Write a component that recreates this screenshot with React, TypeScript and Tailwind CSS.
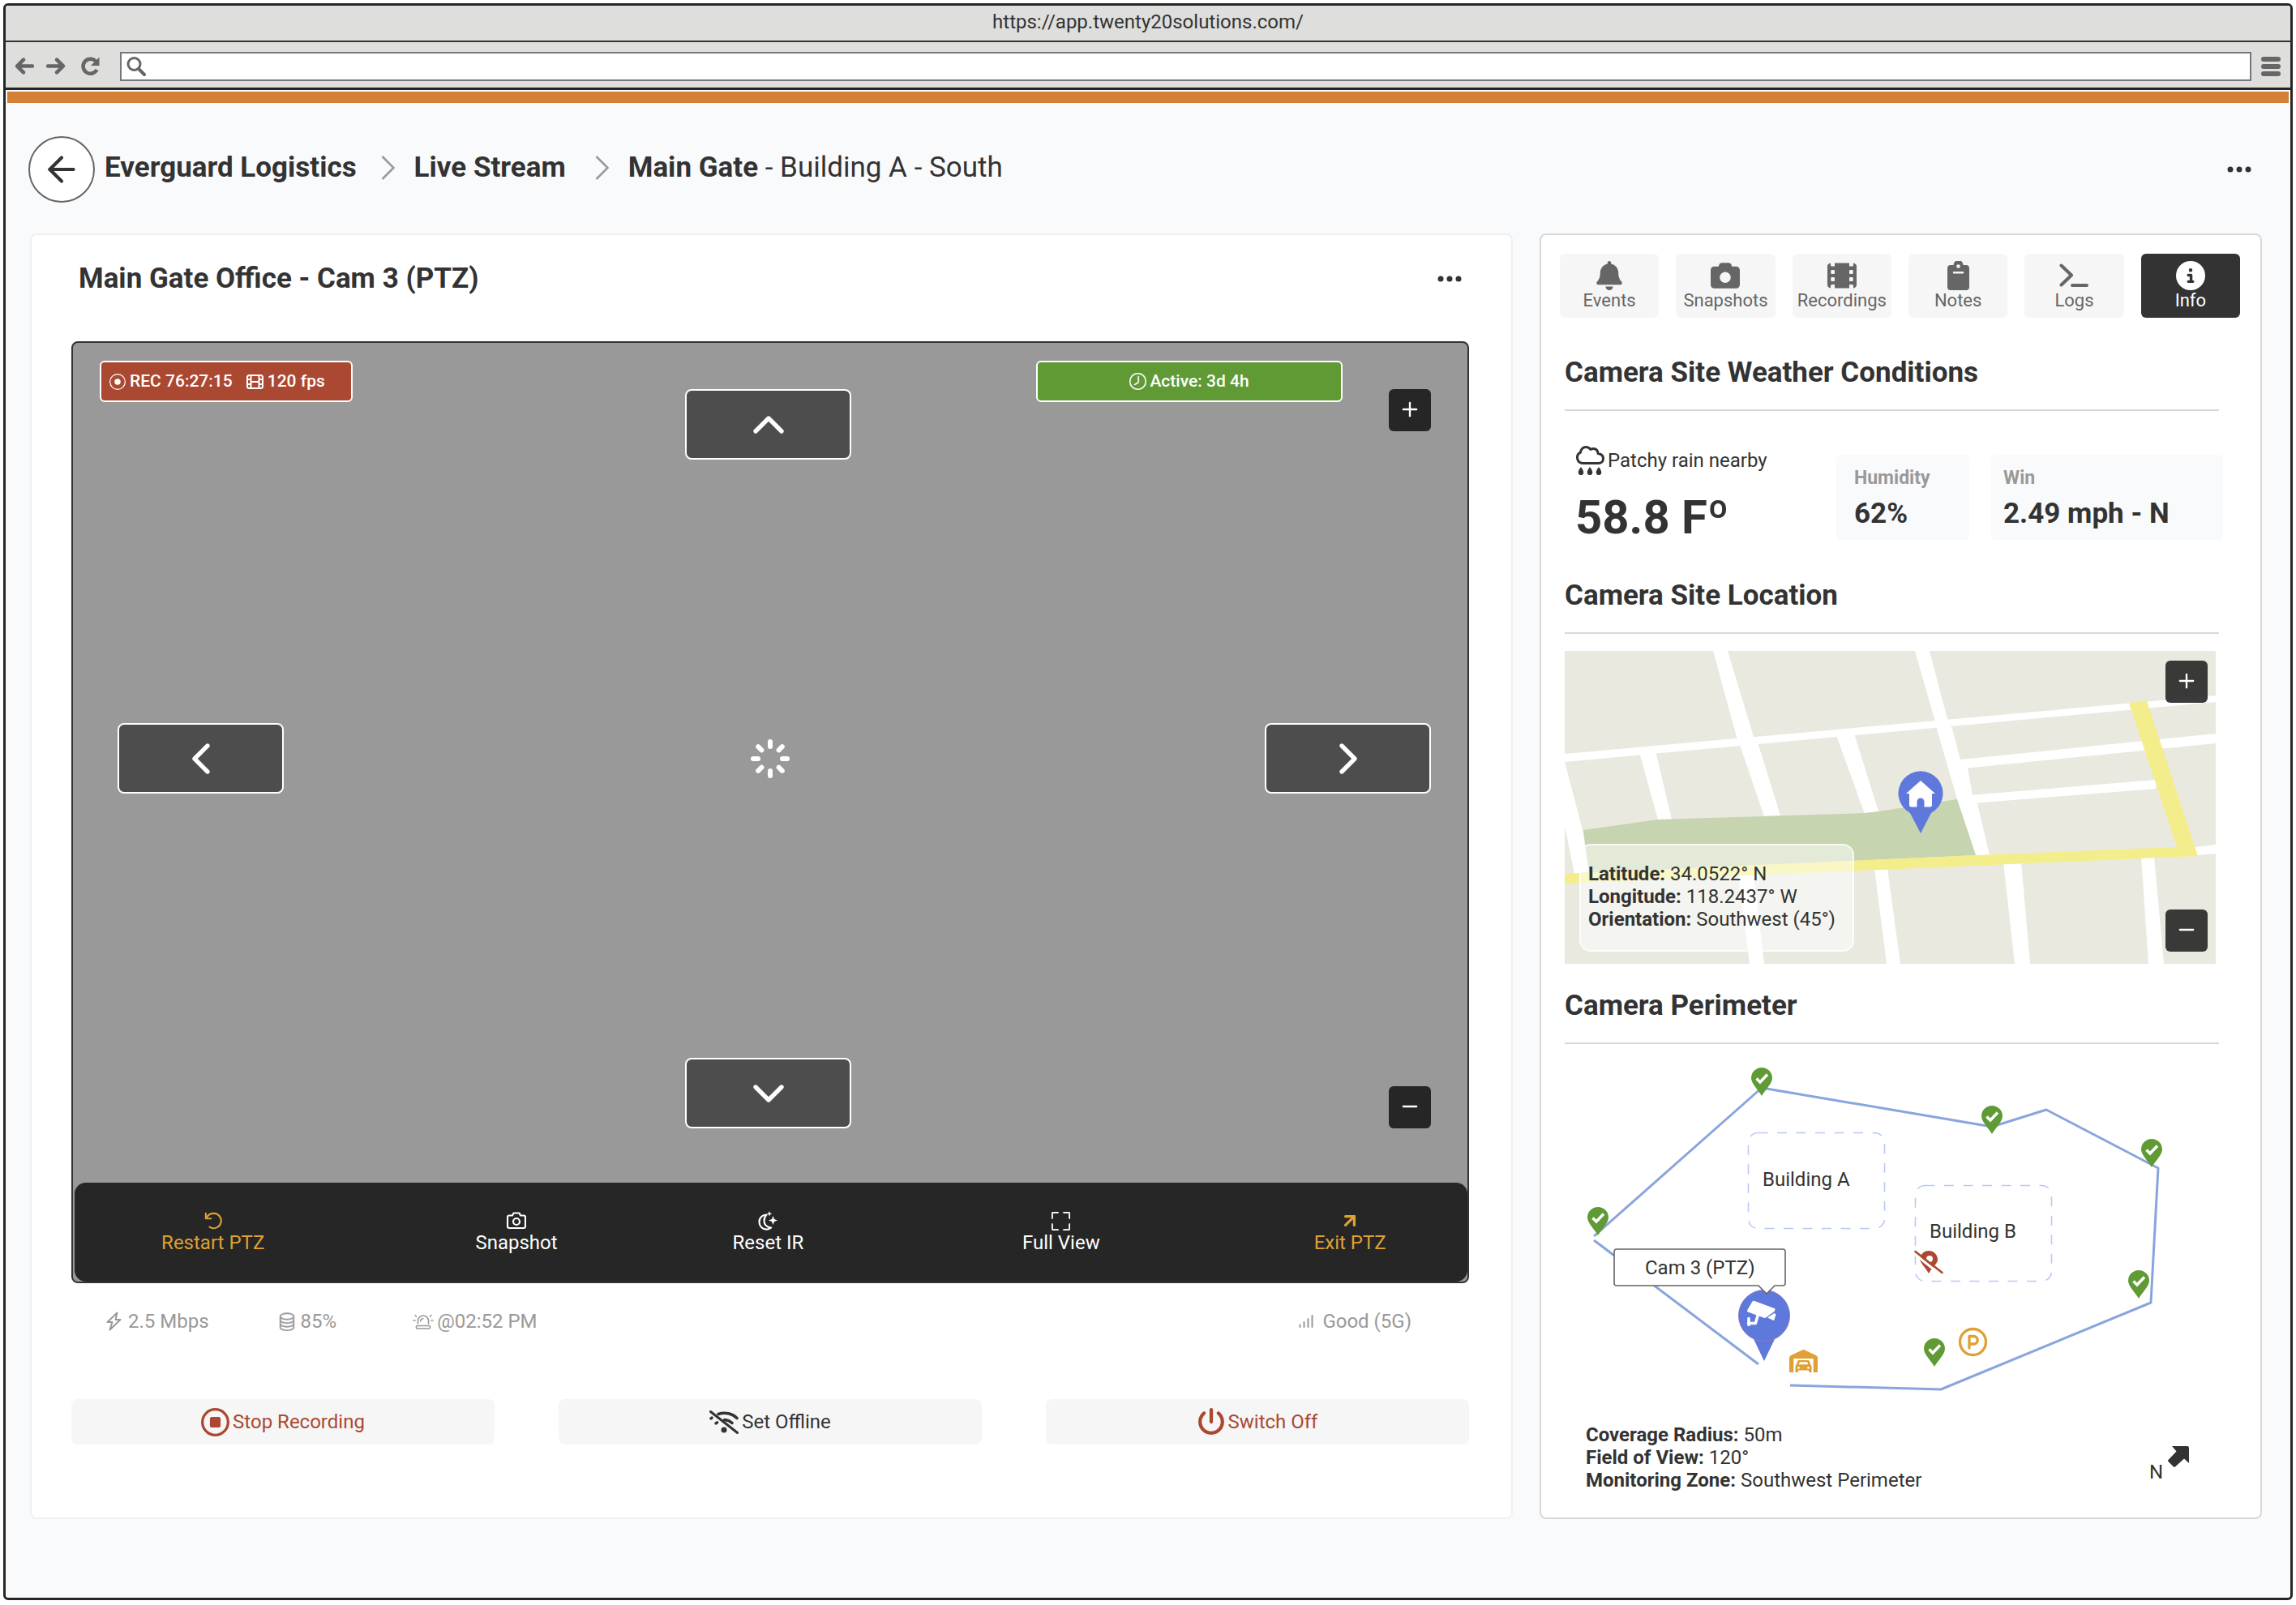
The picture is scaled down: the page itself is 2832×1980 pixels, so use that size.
import { ReactNode, SVGProps, useState } from 'react';
import { ArrowLeft, ArrowUpRight, ChevronDown, ChevronLeft, ChevronRight, ChevronUp, Minus, Plus } from 'lucide-react';
import { BsClock, BsDatabase, BsFullscreen, BsRecordCircle } from 'react-icons/bs';
import { FaArrowLeft, FaArrowRight, FaBell, FaCamera, FaCircleInfo, FaPowerOff, FaRegCircleStop } from 'react-icons/fa6';

type IconProps = SVGProps<SVGSVGElement>;

/* ---------- Icons ---------- */

const ReloadIcon = (p: IconProps) => (
  <svg viewBox="0 0 24 24" fill="none" {...p}>
    <path d="M19 5.5A9 9 0 1 0 20.5 16" stroke="currentColor" strokeWidth="4.5" />
    <path d="M23.500 0.500v10.500h-10.500z" fill="currentColor" />
  </svg>
);

const SearchIcon = (p: IconProps) => (
  <svg viewBox="0 0 24 24" fill="none" stroke="currentColor" {...p}>
    <circle cx="9.500" cy="9" r="7.500" strokeWidth="3" />
    <path d="M15 15l7 7" strokeWidth="4" strokeLinecap="round" />
  </svg>
);

const MenuIcon = (p: IconProps) => (
  <svg viewBox="0 0 24 24" fill="currentColor" {...p}>
    <rect y="0" width="24" height="6" rx="3" />
    <rect y="9" width="24" height="6" rx="3" />
    <rect y="18" width="24" height="6" rx="3" />
  </svg>
);

const FilmIcon = (p: IconProps) => (
  <svg viewBox="0 0 36 32" fill="currentColor" {...p}>
    <path
      fillRule="evenodd"
      d="M4 .5V3a1.500 1.500 0 0 0 1.500 1.500H9V.5h18v4h3.500A1.500 1.500 0 0 0 32 3V.5c2.500.5 4 2 4 4v23c0 2-1.500 3.500-4 4V28.500A1.500 1.500 0 0 0 30.500 27H27v4.500H9V27H5.500A1.500 1.500 0 0 0 4 28.500v3c-2.500-.5-4-2-4-4v-23C0 2.500 1.500 1 4 .5zM5.500 9A1.200 1.200 0 0 0 4.300 10.200v2.600A1.200 1.200 0 0 0 5.500 14h2.300A1.200 1.200 0 0 0 9 12.800v-2.600A1.200 1.200 0 0 0 7.800 9zM5.500 18a1.200 1.200 0 0 0-1.200 1.200v2.600A1.200 1.200 0 0 0 5.500 23h2.300A1.200 1.200 0 0 0 9 21.800v-2.600A1.200 1.200 0 0 0 7.800 18zM28.200 9A1.200 1.200 0 0 0 27 10.200v2.600a1.200 1.200 0 0 0 1.200 1.200h2.300a1.200 1.200 0 0 0 1.200-1.200v-2.600A1.200 1.200 0 0 0 30.500 9zM28.200 18a1.200 1.200 0 0 0-1.200 1.200v2.600a1.200 1.200 0 0 0 1.200 1.200h2.300a1.200 1.200 0 0 0 1.200-1.200v-2.600a1.200 1.200 0 0 0-1.200-1.200z"
    />
  </svg>
);

const FilmOutlineIcon = (p: IconProps) => (
  <svg viewBox="0 0 21 18" fill="none" stroke="currentColor" strokeWidth="2" {...p}>
    <rect x="1" y="1" width="19" height="16" rx="2.500" />
    <path d="M5.500 1v16M15.500 1v16M5.500 9h10M1 6h4.500M1 12h4.500M15.500 6H20M15.500 12H20" />
  </svg>
);

const ClipboardIcon = (p: IconProps) => (
  <svg viewBox="0 0 27 36" fill="currentColor" {...p}>
    <path
      fillRule="evenodd"
      d="M7.500 5a6 6 0 0 1 12 0H23a4 4 0 0 1 4 4v23a4 4 0 0 1-4 4H4a4 4 0 0 1-4-4V9a4 4 0 0 1 4-4zM13.500 4.200a2.300 2.300 0 1 0 0 4.600 2.300 2.300 0 0 0 0-4.600zM8 13a1.200 1.200 0 0 0 0 2.500h11a1.200 1.200 0 0 0 0-2.500z"
    />
  </svg>
);

const TerminalIcon = (p: IconProps) => (
  <svg viewBox="0 0 36 30" fill="none" stroke="currentColor" strokeWidth="4" strokeLinecap="round" strokeLinejoin="round" {...p}>
    <path d="M2.500 2.500l12.500 12-12.500 12M16 27h18" />
  </svg>
);

const RestartIcon = (p: IconProps) => (
  <svg viewBox="0 0 24 24" fill="none" stroke="currentColor" strokeWidth="2.300" strokeLinecap="round" strokeLinejoin="round" {...p}>
    <path d="M2 2v7h7M2.500 8.500C5 4 8.500 2 12.500 2a10 10 0 1 1-5.500 18.300" />
  </svg>
);

const CameraOutlineIcon = (p: IconProps) => (
  <svg viewBox="0 0 24 22" fill="none" stroke="currentColor" strokeWidth="2.200" strokeLinejoin="round" {...p}>
    <path d="M3 4.500h4l1.500-3h7l1.500 3h4a2 2 0 0 1 2 2V18a2 2 0 0 1-2 2H3a2 2 0 0 1-2-2V6.500a2 2 0 0 1 2-2z" />
    <circle cx="12" cy="12" r="4" />
  </svg>
);

const NightIcon = (p: IconProps) => (
  <svg viewBox="0 0 24 24" fill="none" stroke="currentColor" {...p}>
    <path d="M10.500 4.500C5.500 4.500 1.500 8.300 1.500 13.500s4 9.200 9 9.200c2.300 0 4.300-.9 5.700-2.200C10.500 20 7.500 16.500 7.500 12c0-3 1-5.500 3-7.500z" strokeWidth="2.200" strokeLinejoin="round" />
    <path
      stroke="none"
      fill="currentColor"
      d="M18.500 6l1.500 4 4 1.500-4 1.500-1.500 4-1.500-4-4-1.500 4-1.500zM14 0l.9 2.400 2.400.9-2.400.9-.9 2.400-.9-2.400-2.400-.9 2.400-.9z"
    />
  </svg>
);

const BoltIcon = (p: IconProps) => (
  <svg viewBox="0 0 19 24" fill="none" stroke="currentColor" strokeWidth="2" strokeLinejoin="round" {...p}>
    <path d="M13.500 1.500L1.500 13h6l-3 9.500L17.500 10h-6z" />
  </svg>
);

const SirenIcon = (p: IconProps) => (
  <svg viewBox="0 0 26 19" fill="none" stroke="currentColor" strokeWidth="1.600" strokeLinecap="round" {...p}>
    <rect x="4.500" y="14.500" width="17" height="3.500" rx="1" />
    <path d="M6.500 12V8.500a6.500 6.500 0 0 1 13 0V12M9.800 9a3.200 3.200 0 0 1 3-3.200M1 8h2M23 8h2M3 1.500l1.500 1.500M23 1.500L21.500 3" />
  </svg>
);

const SignalIcon = (p: IconProps) => (
  <svg viewBox="0 0 18 16" stroke="currentColor" strokeWidth="2" strokeLinecap="round" {...p}>
    <path d="M1.500 12.500V15M6.500 9v6M11.500 5v10M16.500 1v14" />
  </svg>
);

const WifiOffIcon = (p: IconProps) => (
  <svg viewBox="0 0 36 29" fill="none" stroke="currentColor" strokeWidth="3.500" strokeLinecap="round" {...p}>
    <path d="M11 4.500C19.500 1.500 28.500 4 34 9.500M2 9.800l1-.8M18.500 11.500c4 .3 7 1.700 9.500 4M8 16l1.500-1.200" />
    <circle cx="18" cy="24" r="3.500" fill="currentColor" stroke="none" />
    <path d="M1.500 1.500l33 26" strokeWidth="3" />
  </svg>
);

const RainIcon = (p: IconProps) => (
  <svg viewBox="0 0 36 36" fill="none" stroke="currentColor" strokeWidth="3" strokeLinejoin="round" {...p}>
    <path d="M9 21.500A7 7 0 0 1 6.500 8.200C6.500 4.500 9.500 1.500 13 1.500c2.500 0 4.500 1 5.800 2.900C23.500 2 28 4.500 28 9.500c4 .5 6.500 3 6.500 6.200 0 3.300-2.500 5.800-6 5.800z" />
    <path
      stroke="none"
      fill="currentColor"
      d="M7 26c2 3 3.300 5 3.300 6.800a3.300 3.300 0 0 1-6.600 0C3.700 31 5 29 7 26zM18 26c2 3 3.300 5 3.300 6.800a3.300 3.300 0 0 1-6.600 0C14.700 31 16 29 18 26zM29 26c2 3 3.300 5 3.300 6.800a3.300 3.300 0 0 1-6.600 0C25.700 31 27 29 29 26z"
    />
  </svg>
);

const DotsIcon = (p: IconProps) => (
  <svg viewBox="0 0 30 8" fill="currentColor" {...p}>
    <circle cx="4" cy="4" r="3.500" />
    <circle cx="15" cy="4" r="3.500" />
    <circle cx="26" cy="4" r="3.500" />
  </svg>
);

const SpinnerIcon = (p: IconProps) => (
  <svg viewBox="0 0 48 48" stroke="currentColor" strokeWidth="6" strokeLinecap="round" {...p}>
    <path d="M24 3v6M24 39v6M3 24h6M39 24h6M9.200 9.200l4.200 4.200M34.600 34.600l4.200 4.200M9.200 38.800l4.200-4.200M34.600 13.400l4.200-4.200" />
  </svg>
);

/* ---------- Shared pieces ---------- */

const Crumb = () => (
  <svg viewBox="0 0 18 30" fill="none" stroke="#999" strokeWidth="2.500" className="h-[30px] w-[18px]">
    <path d="M1.500 1l14 14-14 14" />
  </svg>
);

const SectionTitle = ({ children }: { children: ReactNode }) => (
  <h2 className="border-b-2 border-[#d8d8d8] pb-[23px] text-[35px] leading-[44px] font-bold">{children}</h2>
);

const PanButton = ({ label, className, children }: { label: string; className: string; children: ReactNode }) => (
  <button
    aria-label={label}
    className={`absolute flex h-[87px] w-[205px] items-center justify-center rounded-lg border-2 border-white bg-[#4d4d4d] text-white ${className}`}
  >
    {children}
  </button>
);

const ZoomButton = ({ label, className, children }: { label: string; className: string; children: ReactNode }) => (
  <button aria-label={label} className={`absolute flex size-[52px] items-center justify-center rounded-md pb-[3px] text-white ${className}`}>
    {children}
  </button>
);

/* ---------- Browser chrome ---------- */

function BrowserBar() {
  return (
    <div className="bg-[#dededc]">
      <div className="flex h-[45px] items-center justify-center border-b-2 border-[#333] pb-1 text-[24px] leading-[28px]">
        https://app.twenty20solutions.com/
      </div>
      <div className="flex h-[59px] items-center border-b-[3px] border-[#262626] pt-[3px] pr-[12px] pl-[11px] text-[#666]">
        <button aria-label="Back"><FaArrowLeft className="size-[25px] stroke-current stroke-[30]" /></button>
        <button aria-label="Forward" className="ml-[13px]"><FaArrowRight className="size-[25px] stroke-current stroke-[30]" /></button>
        <button aria-label="Reload" className="ml-[18px]"><ReloadIcon className="size-[24px]" /></button>
        <div className="ml-[25px] flex h-[36px] grow items-center border-2 border-[#777] bg-white pl-[6px]">
          <SearchIcon className="size-[24px]" />
          <input aria-label="Address" className="h-full grow px-2 text-[22px] outline-none" />
        </div>
        <button aria-label="Menu" className="ml-[12px]"><MenuIcon className="size-[24px]" /></button>
      </div>
    </div>
  );
}

/* ---------- Live stream ---------- */

const actions = [
  { label: 'Restart PTZ', icon: <RestartIcon className="size-[22px]" />, color: 'text-[#dfa035]' },
  { label: 'Snapshot', icon: <CameraOutlineIcon className="h-[22px] w-[24px]" />, color: 'text-white' },
  { label: 'Reset IR', icon: <NightIcon className="size-[24px]" />, color: 'text-white' },
  { label: 'Full View', icon: <BsFullscreen className="size-[23px] stroke-current stroke-[0.5]" />, color: 'text-white' },
  { label: 'Exit PTZ', icon: <ArrowUpRight className="size-[26px]" strokeWidth={3} />, color: 'text-[#dfa035]' },
];

function VideoPlayer() {
  return (
    <div className="relative mt-[55px] flex h-[1162px] flex-col justify-end overflow-hidden rounded-lg border-2 border-[#333] bg-[#999] pl-[2px]">
      <div className="absolute top-[22px] left-[33px] flex h-[51px] w-[312px] items-center rounded-md border-2 border-white bg-[#ab4831] px-[10px] text-[21px] font-medium text-white">
        <BsRecordCircle className="size-[20px]" />
        <span className="ml-[5px]">REC 76:27:15</span>
        <FilmOutlineIcon className="ml-[17px] h-[18px] w-[21px]" />
        <span className="ml-[5px]">120 fps</span>
      </div>
      <div className="absolute top-[22px] right-[154px] flex h-[51px] w-[378px] items-center justify-center gap-[4px] rounded-md border-2 border-white bg-[#5f9a35] text-[21px] font-medium text-white">
        <BsClock className="size-[21px] -scale-x-100 stroke-current stroke-[0.3]" />
        Active: 3d 4h
      </div>

      <PanButton label="Tilt up" className="top-[57px] right-[5px] left-0 mx-auto">
        <ChevronUp className="size-[64px]" strokeWidth={2} />
      </PanButton>
      <PanButton label="Tilt down" className="right-[5px] bottom-[189px] left-0 mx-auto">
        <ChevronDown className="size-[64px]" strokeWidth={2} />
      </PanButton>
      <PanButton label="Pan left" className="bottom-[602px] left-[55px]">
        <ChevronLeft className="size-[64px]" strokeWidth={2} />
      </PanButton>
      <PanButton label="Pan right" className="right-[45px] bottom-[602px]">
        <ChevronRight className="size-[64px]" strokeWidth={2} />
      </PanButton>
      <SpinnerIcon className="absolute inset-x-0 bottom-[621px] mx-auto size-[48px] text-white" />
      <ZoomButton label="Zoom in" className="top-[57px] right-[45px] bg-[#262626]"><Plus className="size-[28px]" /></ZoomButton>
      <ZoomButton label="Zoom out" className="right-[45px] bottom-[189px] bg-[#262626]"><Minus className="size-[28px]" /></ZoomButton>

      <div className="grid h-[122px] grid-cols-[342fr_408fr_214fr_510fr_204fr] rounded-[14px] bg-[#262626] pr-[43px]">
        {actions.map((a) => (
          <button key={a.label} className={`flex flex-col items-center justify-center text-[24px] leading-[28px] ${a.color}`}>
            <span className="flex h-[26px] items-center">{a.icon}</span>
            {a.label}
          </button>
        ))}
      </div>
    </div>
  );
}

function StreamCard() {
  const buttonClass = 'flex h-[56px] items-center justify-center gap-[4px] rounded-lg bg-[#f6f6f6]';
  return (
    <section className="rounded-lg border-2 border-[#f0f0f0] bg-white pt-[32px] pr-[52px] pl-[49px]">
      <div className="flex items-center justify-between px-[9px]">
        <h1 className="text-[35px] leading-[44px] font-bold">Main Gate Office - Cam 3 (PTZ)</h1>
        <button aria-label="Camera options"><DotsIcon className="h-[8px] w-[30px]" /></button>
      </div>

      <VideoPlayer />

      <div className="mt-[33px] flex items-center pr-[71px] pl-[43px] text-[24px] leading-[28px] text-[#999]">
        <BoltIcon className="h-[24px] w-[19px]" />
        <span className="ml-[8px]">2.5 Mbps</span>
        <BsDatabase className="ml-[84px] size-[24px] stroke-current stroke-[0.3]" />
        <span className="ml-[5px]">85%</span>
        <SirenIcon className="ml-[94px] h-[19px] w-[26px]" />
        <span className="ml-[4px] grow">@02:52 PM</span>
        <SignalIcon className="h-[16px] w-[18px]" />
        <span className="ml-[11px]">Good (5G)</span>
      </div>

      <div className="mt-[82px] grid grid-cols-3 gap-[79px] text-[24px]">
        <button className={`${buttonClass} text-[#ab4831]`}>
          <FaRegCircleStop className="size-[35px]" />
          Stop Recording
        </button>
        <button className={buttonClass}>
          <WifiOffIcon className="h-[29px] w-[36px]" />
          Set Offline
        </button>
        <button className={`${buttonClass} text-[#ab4831]`}>
          <FaPowerOff className="size-[34px]" />
          Switch Off
        </button>
      </div>
    </section>
  );
}

/* ---------- Info panel ---------- */

const tabs = [
  { label: 'Events', icon: <FaBell className="size-[36px]" /> },
  { label: 'Snapshots', icon: <FaCamera className="size-[36px]" /> },
  { label: 'Recordings', icon: <FilmIcon className="h-[32px] w-[36px]" /> },
  { label: 'Notes', icon: <ClipboardIcon className="h-[36px] w-[27px]" /> },
  { label: 'Logs', icon: <TerminalIcon className="h-[30px] w-[36px]" /> },
  { label: 'Info', icon: <FaCircleInfo className="size-[36px]" /> },
];

function Weather() {
  return (
    <div className="-mr-[5px] flex items-start">
      <div className="mt-[47px] ml-[13px] grow">
        <p className="flex items-center gap-[4px] text-[24px] leading-[28px]">
          <RainIcon className="-my-1 size-[36px]" />
          Patchy rain nearby
        </p>
        <p className="mt-[22px] text-[58px] leading-[68px] font-bold">58.8 Fº</p>
      </div>
      <dl className="mt-[54px] h-[105px] w-[164px] rounded-md bg-[#f9fafc] px-[22px] pt-[15px]">
        <dt className="text-[23px] leading-[28px] font-bold text-[#999]">Humidity</dt>
        <dd className="mt-[8px] text-[35px] leading-[44px] font-bold">62%</dd>
      </dl>
      <dl className="mt-[54px] ml-[27px] h-[105px] w-[286px] rounded-md bg-[#f9fafc] px-[15px] pt-[15px]">
        <dt className="text-[23px] leading-[28px] font-bold text-[#999]">Win</dt>
        <dd className="mt-[8px] text-[35px] leading-[44px] font-bold">2.49 mph - N</dd>
      </dl>
    </div>
  );
}

function SiteMap() {
  return (
    <div className="relative mt-[21px] mr-[4px] h-[386px]">
      <svg viewBox="0 0 803 386" preserveAspectRatio="xMidYMid slice" className="size-full">
        <rect width="803" height="386" fill="#e9e9e0" />
        <g fill="#fff">
          <path d="M183 0h18l32 106 6 10 27 87-20 1-30-88-4-10z" />
          <path d="M432 0h18l22 84 6 12 10 38 9 10 6 34 6 10 15 64h-17l-23-69-25-87-3-12z" />
          <path d="M0 127L803 55v8L0 137z" />
          <path d="M92 125l20-2 20 85h-17zM335 104l22-2 30 96-17 3z" />
          <path d="M488 134l315-32v12L492 145zM500 178l229-19v11l-226 18z" />
          <path d="M0 137l22 84 8 51-18 3-12-59zM770 243l33-4v11l-33 3z" />
          <path d="M214 276h19l13 110h-18zM382 268h16l16 118h-17zM541 260h22l11 126h-19zM711 254h16l12 132h-19z" />
        </g>
        <path d="M23 221l92-13 255-8 17-2 97-15 23 69-477 22z" fill="#c6d4b0" />
        <path d="M0 275l507-23 248-10L696 64l22-2 63 191L0 287z" fill="#f3ee8b" />
        {/* home pin */}
        <path d="M439 225l-13-25a27.500 27.500 0 1 1 26 0z" fill="#5f78dc" />
        <path d="M439 160l18 16h-4v14a2.500 2.500 0 0 1-2.500 2.500h-7V186a4.500 4.500 0 0 0-9 0v6.500h-7A2.500 2.500 0 0 1 425 190v-14h-4z" fill="#fff" />
      </svg>
      <p className="absolute top-[238px] left-[18px] h-[133px] w-[339px] rounded-[14px] border-2 border-white/70 bg-white/50 px-[9px] pt-[21px] text-[24px] leading-[28px]">
        <b>Latitude:</b> 34.0522° N<br />
        <b>Longitude:</b> 118.2437° W<br />
        <b>Orientation:</b> Southwest (45°)
      </p>
      <ZoomButton label="Map zoom in" className="top-[12px] right-[10px] bg-[#262626]/90"><Plus className="size-[28px]" /></ZoomButton>
      <ZoomButton label="Map zoom out" className="right-[10px] bottom-[15px] bg-[#262626]/90"><Minus className="size-[28px]" /></ZoomButton>
    </div>
  );
}

const sensors = [
  [243, 29],
  [527, 76],
  [724, 117],
  [41, 201],
  [708, 279],
  [456, 363],
];

function PerimeterMap() {
  return (
    <svg viewBox="0 0 807 450" className="w-full text-[24px]" fill="none">
      <path d="M36 237L243 54l284 48 67-21 138 72-9 166-259 107-186-5M36 242l203 153" stroke="#88a5dd" strokeWidth="3" strokeLinejoin="round" />

      <g stroke="#b9c9f2" strokeWidth="1.600" strokeDasharray="12 11.500">
        <rect x="226.500" y="109.500" width="168" height="118" rx="12" />
        <rect x="432.500" y="174.500" width="168" height="118" rx="12" />
      </g>
      <text x="244" y="175" fill="#333">Building A</text>
      <text x="450" y="239" fill="#333">Building B</text>

      {sensors.map(([x, y]) => (
        <g key={x} transform={`translate(${x - 13} ${y})`}>
          <path d="M13 35C9 28 0 19.500 0 13a13 13 0 0 1 26 0c0 6.500-9 15-13 22z" fill="#5f9a35" />
          <path d="M6.500 13.500l4.500 4.500 9-9.500" stroke="#fff" strokeWidth="3.500" />
        </g>
      ))}

      {/* offline sensor */}
      <g>
        <path
          fillRule="evenodd"
          d="M449 283c-3-6-11-14-11-17a11 11 0 1 1 22 0c0 5-8 11-11 17zM450 261a4 4 0 1 0 0 8 4 4 0 0 0 0-8z"
          fill="#ab4831"
        />
        <path d="M431 258.500l33 26.500" stroke="#fff" strokeWidth="3" />
        <path d="M432.500 256l33 26" stroke="#ab4831" strokeWidth="2.600" strokeLinecap="round" />
      </g>

      {/* camera pin */}
      <path d="M246 391l-13-27h26z" fill="#5f78dc" />
      <circle cx="246" cy="335" r="31.500" fill="#5f78dc" stroke="#8579bd" />
      <g fill="#fff">
        <path d="M233.500 316.800l25 9.200a1.500 1.500 0 0 1 .6 2.500l-.6 1.500-10.500 7.500a2.500 2.500 0 0 1-2.300.3l-19.800-7.300a1.500 1.500 0 0 1-.8-2l6.200-10.700a1.800 1.800 0 0 1 2.200-1z" />
        <path d="M250 337.500l8.500-5.500 1.500.8a1.500 1.500 0 0 1 .3 1.500l-1.800 5.700a1.200 1.200 0 0 1-1.500.8z" />
        <path d="M238 335.500l-2.700 9h-8.800M227 338.500v8" fill="none" stroke="#fff" strokeWidth="3.600" strokeLinecap="round" strokeLinejoin="round" />
      </g>

      <path
        d="M64 253h205a3 3 0 0 1 3 3v39a3 3 0 0 1-3 3h-10l-10 10-10-10H64a3 3 0 0 1-3-3v-39a3 3 0 0 1 3-3z"
        fill="#fff"
        stroke="#666"
        strokeWidth="1.600"
      />
      <text x="99" y="284" fill="#333">Cam 3 (PTZ)</text>

      {/* garage */}
      <g fill="#dfa035">
        <path d="M277 405v-18a3.500 3.500 0 0 1 2-3l14.500-6.700a3 3 0 0 1 2 0l14.500 6.700a3.500 3.500 0 0 1 2 3v18h-5.300v-17h-24.400v17z" />
        <path
          fillRule="evenodd"
          d="M289 390h11a2 2 0 0 1 1.800 1.300l1.500 4.200c.8.5 1.200 1.300 1.200 2.500v6a1 1 0 0 1-1 1h-1.500a1 1 0 0 1-1-1v-1.500h-13v1.500a1 1 0 0 1-1 1h-1.500a1 1 0 0 1-1-1v-6c0-1.200.4-2 1.200-2.500l1.500-4.200A2 2 0 0 1 289 390zM289.800 392.300l-1 3h11.400l-1-3zM288.500 398a1.400 1.400 0 1 0 0 2.800 1.400 1.400 0 0 0 0-2.800zM300.500 398a1.400 1.400 0 1 0 0 2.800 1.400 1.400 0 0 0 0-2.800z"
        />
      </g>

      {/* parking */}
      <g stroke="#dfa035" strokeWidth="3.300">
        <circle cx="503.500" cy="367.500" r="16" />
        <path d="M499 375v-14.500h5.500a4.500 4.500 0 0 1 0 9.500H499" strokeLinecap="round" strokeLinejoin="round" />
      </g>
    </svg>
  );
}

function InfoPanel() {
  const [active, setActive] = useState('Info');

  return (
    <aside className="rounded-lg border-2 border-[#d8d8d8] bg-white pt-[23px] pr-[25px] pb-[32px] pl-[23px]">
      <nav className="grid grid-cols-6 gap-[21px]">
        {tabs.map((tab) => (
          <button
            key={tab.label}
            onClick={() => setActive(tab.label)}
            className={`flex h-[79px] flex-col items-center rounded-md pt-[9px] text-[22px] leading-[26px] ${
              active === tab.label ? 'bg-[#333] text-white' : 'bg-[#f6f6f6] text-[#666]'
            }`}
          >
            <span className="flex h-[36px] items-center">{tab.icon}</span>
            {tab.label}
          </button>
        ))}
      </nav>

      <div className="mt-[46px] pr-[26px] pl-[6px]">
        <SectionTitle>Camera Site Weather Conditions</SectionTitle>
        <Weather />
        <div className="mt-[41px]">
          <SectionTitle>Camera Site Location</SectionTitle>
        </div>
        <SiteMap />
        <div className="mt-[30px]">
          <SectionTitle>Camera Perimeter</SectionTitle>
        </div>
        <PerimeterMap />

        <div className="mt-[18px] flex items-start justify-between pr-[37px] pl-[26px] text-[24px] leading-[28px]">
          <p>
            <b>Coverage Radius:</b> 50m<br />
            <b>Field of View:</b> 120°<br />
            <b>Monitoring Zone:</b> Southwest Perimeter
          </p>
          <p className="flex items-center pt-[12px]">
            <span className="pt-[38px] leading-[20px]">N</span>
            <svg viewBox="0 0 26 26" fill="currentColor" className="ml-[6px] size-[26px]">
              <path d="M5 0h19a2 2 0 0 1 2 2v19l-6-5.500L9 25.500a1.500 1.500 0 0 1-2 0L.5 19a1.500 1.500 0 0 1 0-2L10.500 6.500z" />
            </svg>
          </p>
        </div>
      </div>
    </aside>
  );
}

export default function App() {
  return (
    <div className="flex min-h-screen bg-white px-1 pt-1 pb-[6px] font-[Roboto,sans-serif] text-[#333]">
      <div className="flex grow flex-col overflow-hidden rounded-md border-[3px] border-[#262626] bg-[#f9fafc]">
        <BrowserBar />
        <div className="mx-[2px] mt-[2px] h-[14px] bg-[#d48137]" />

        <main className="grow pt-[41px] pr-[35px] pl-[30px]">
          <header className="flex items-center justify-between pr-[13px]">
            <div className="-ml-[2px] flex items-center">
              <button aria-label="Go back" className="flex size-[82px] items-center justify-center rounded-full border-2 border-[#666] bg-white">
                <ArrowLeft className="size-[50px]" strokeWidth={2} />
              </button>
              <nav className="ml-[12px] flex items-center pb-[5px] text-[35px] leading-[44px]">
                <a href="#site" className="mr-[30px] font-bold">Everguard Logistics</a>
                <Crumb />
                <a href="#live" className="mr-[36px] ml-[23px] font-bold">Live Stream</a>
                <Crumb />
                <span className="ml-[23px]"><b>Main Gate</b> - Building A - South</span>
              </nav>
            </div>
            <button aria-label="Page options"><DotsIcon className="h-[8px] w-[30px]" /></button>
          </header>

          <div className="mt-[38px] grid grid-cols-[1829fr_891fr] gap-[33px]">
            <StreamCard />
            <InfoPanel />
          </div>
        </main>
      </div>
    </div>
  );
}
